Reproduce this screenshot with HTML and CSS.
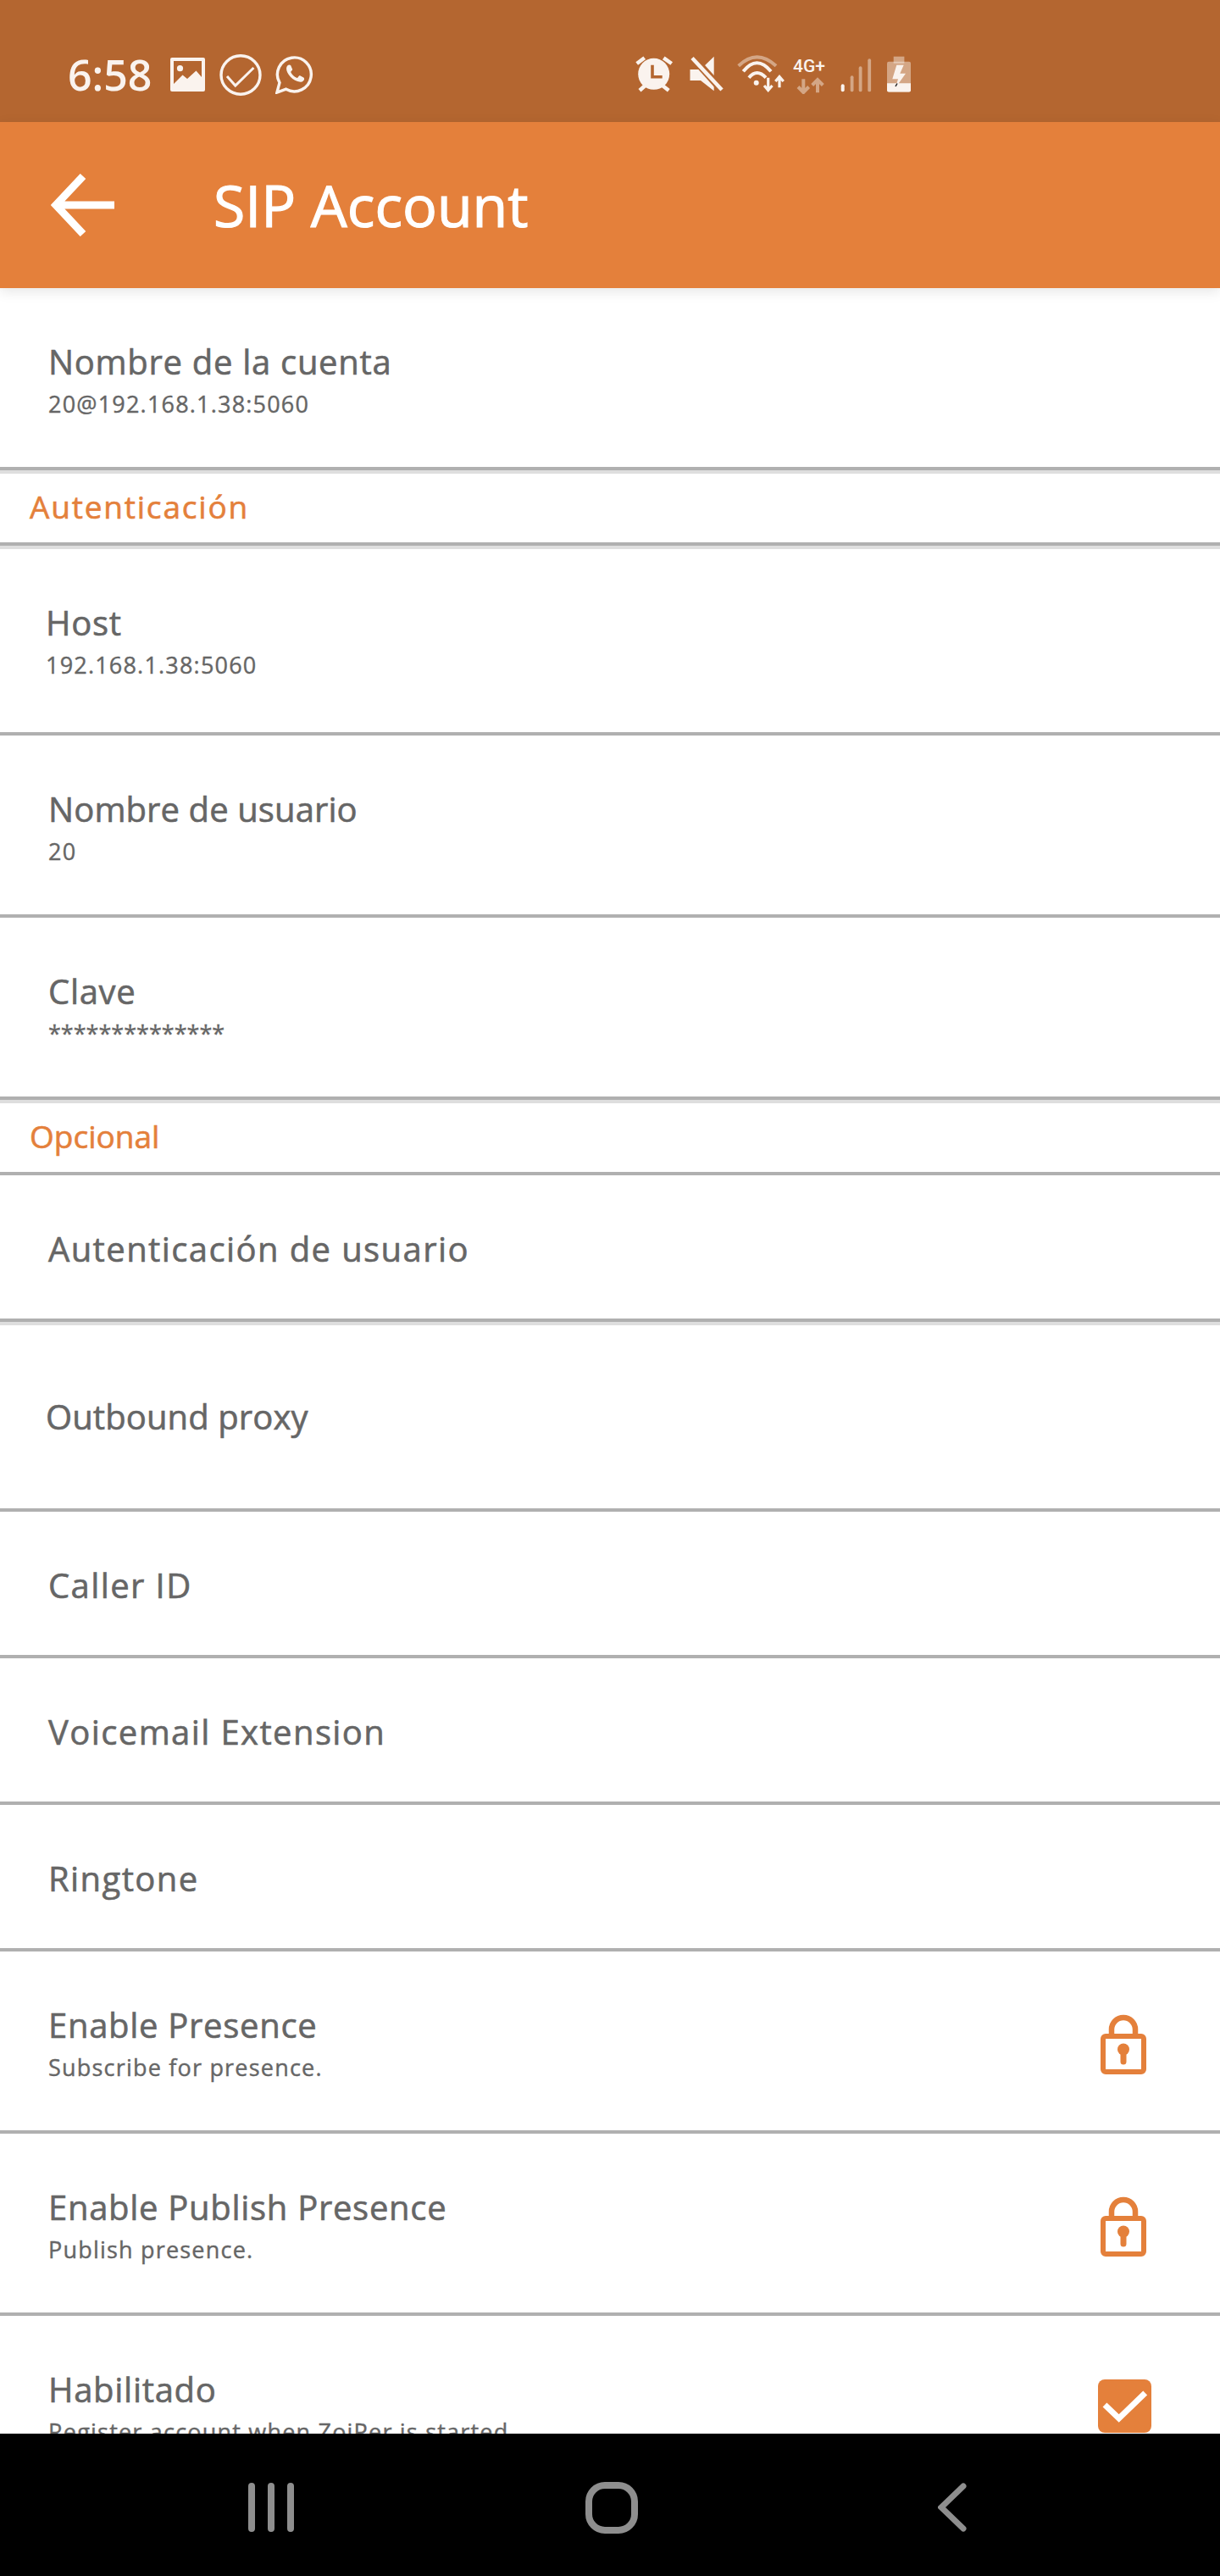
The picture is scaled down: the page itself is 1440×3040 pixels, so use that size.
FILE: index.html
```html
<!DOCTYPE html>
<html lang="es">
<head>
    <meta charset="UTF-8">
    <meta name="viewport" content="width=device-width, initial-scale=1.0">
    <title>SIP Account</title>
    <link rel="stylesheet" href="styles.css">
</head>
<body>
    <div class="screen">
        <div class="statusBar">
            <div class="statusLeft">
                <span class="clock">6:58</span>
                <svg class="icoImage" viewBox="0 0 41 40">
                    <rect width="41" height="40" rx="2" fill="#faf3ee"/>
                    <rect x="4" y="4" width="33" height="27" fill="#b46630"/>
                    <circle cx="11.5" cy="12.7" r="3.6" fill="#faf3ee"/>
                    <path d="M4 31 L14.5 20.5 L20 25 L30.5 15.5 L37 23 V31 Z" fill="#faf3ee"/>
                </svg>
                <svg class="icoCheck" viewBox="0 0 50 49">
                    <ellipse cx="25" cy="24.5" rx="23" ry="22.7" fill="none" stroke="#faf3ee" stroke-width="3.4"/>
                    <path d="M9 26 L18.8 37 L40.4 16" fill="none" stroke="#faf3ee" stroke-width="3"/>
                </svg>
                <svg class="icoChat" viewBox="0 0 24 24">
                    <path d="M1 23 L2.6 17 A10.4 10.4 0 1 1 6.6 21 Z" fill="none" stroke="#faf3ee" stroke-width="1.8"/>
                    <path d="M8.6 6c-.7 0-1.8.7-1.8 2.4 0 2.9 3.9 7.9 8.6 8.2 1.4.1 2.4-1 2.4-1.8 0-.5-.1-.8-.4-1l-2.2-1.1c-.3-.1-.5 0-.7.2l-.8 1c-.2.2-.4.2-.6.1-1.4-.6-2.8-1.8-3.5-3.3-.1-.2-.1-.4.1-.6l.7-.8c.1-.2.2-.4.1-.6L9.5 6.400c-.2-.3-.5-.4-.9-.4z" fill="#faf3ee"/>
                </svg>
            </div>
            <div class="statusRight">
                <svg class="icoAlarm" viewBox="0 0 64 46">
                    <circle cx="21.700" cy="22.300" r="18.500" fill="#faf3ee"/>
                    <path d="M1.700 10 L10.700 3.300 M33.300 3.300 L42.700 10 M5 41.700 L11.700 35.700 M31.700 35.700 L39.300 41.700" stroke="#faf3ee" stroke-width="4.500" fill="none"/>
                    <path d="M20 11.700 V25.700 H31.700" stroke="#b46630" stroke-width="3.600" fill="none"/>
                </svg>
                <svg class="icoMute" viewBox="0 0 56 46">
                    <path d="M.5 17 H13 L28.700 1.700 V42.300 L13 30 H.5 Z" fill="#faf3ee"/>
                    <path d="M3 2 L38 41" stroke="#b46630" stroke-width="9" fill="none"/>
                    <path d="M3 3.500 L38 41" stroke="#faf3ee" stroke-width="4.500" fill="none"/>
                </svg>
                <svg class="icoWifi" viewBox="0 0 66 46">
                    <path d="M1.700 12.700 Q23.300 -8 46 12.700" stroke="#faf3ee" stroke-opacity=".45" stroke-width="4" fill="none"/>
                    <path d="M7.300 19.300 Q23.300 -.7 40 19.300" stroke="#faf3ee" stroke-width="4" fill="none"/>
                    <path d="M14 26.700 Q23.300 15.300 34 26.700" stroke="#faf3ee" stroke-width="4" fill="none"/>
                    <circle cx="22.700" cy="32.700" r="3" fill="#faf3ee"/>
                    <path d="M36.700 26.700 V41 M32 36 L36.700 41.500 L41.500 36 M50 38.300 V26 M45.300 31 L50 25.500 L54.700 31" stroke="#faf3ee" stroke-width="3.200" fill="none"/>
                </svg>
                <svg class="icoData" viewBox="0 0 56 46">
                    <text class="netLabel" x="0" y="20">4G+</text>
                    <path d="M12.300 28.300 V44 M6 37.500 L12.300 44 L18.600 37.500 M29 44.300 V29 M22.700 35.500 L29 29 L35.300 35.500" stroke="#faf3ee" stroke-opacity=".45" stroke-width="4" fill="none"/>
                </svg>
                <svg class="icoSignal" viewBox="0 0 55 46">
                    <rect x=".7" y="34.300" width="4" height="9" rx="2" fill="#faf3ee"/>
                    <rect x="11.700" y="24.300" width="3.800" height="19" rx="1.900" fill="#faf3ee" fill-opacity=".45"/>
                    <rect x="21.700" y="13.300" width="3.800" height="30" rx="1.900" fill="#faf3ee" fill-opacity=".45"/>
                    <rect x="32.300" y="4.300" width="3.800" height="39" rx="1.900" fill="#faf3ee" fill-opacity=".45"/>
                </svg>
                <svg class="icoBattery" viewBox="0 0 29 46">
                    <rect x="7.700" y="1.700" width="12.700" height="8" fill="#faf3ee" fill-opacity=".45"/>
                    <rect x="0" y="7.700" width="28" height="35.700" rx="2" fill="#faf3ee" fill-opacity=".45"/>
                    <path d="M0 33.300 H28 V41.400 A2 2 0 0 1 26 43.400 H2 A2 2 0 0 1 0 41.400 Z" fill="#faf3ee"/>
                    <path d="M11.300 11.700 L6.300 28.300 H13 L9.700 39 L22 21.700 H15.300 L19.700 11.700 Z" fill="#faf3ee"/>
                    <path d="M10 37 L12 33.500" stroke="#222" stroke-width="1.500"/>
                </svg>
            </div>
        </div>

        <div class="toolbar">
            <svg class="backArrow" viewBox="0 0 75 74">
                <path d="M75 37 H6 M38 3 L6 37 L38 71" fill="none" stroke="#fff" stroke-width="9"/>
            </svg>
            <h1 class="toolbarTitle">SIP Account</h1>
        </div>

        <div class="settings">
            <div class="row rowSub">
                <div>
                    <div class="rowTitle">Nombre de la cuenta</div>
                    <div class="rowText">20@192.168.1.38:5060</div>
                </div>
            </div>
            <div class="rule ruleShadow"></div>
            <div class="sectionHead">Autenticación</div>
            <div class="rule ruleShadow"></div>
            <div class="row rowTall">
                <div>
                    <div class="rowTitle">Host</div>
                    <div class="rowText">192.168.1.38:5060</div>
                </div>
            </div>
            <div class="rule"></div>
            <div class="row rowSub">
                <div>
                    <div class="rowTitle titleTight">Nombre de usuario</div>
                    <div class="rowText">20</div>
                </div>
            </div>
            <div class="rule"></div>
            <div class="row rowSub">
                <div>
                    <div class="rowTitle">Clave</div>
                    <div class="rowText rowPass">**************</div>
                </div>
            </div>
            <div class="rule ruleShadow"></div>
            <div class="sectionHead sectionTight">Opcional</div>
            <div class="rule"></div>
            <div class="row">
                <div class="rowTitle titleWide">Autenticación de usuario</div>
            </div>
            <div class="rule ruleShadow"></div>
            <div class="row rowTall rowLow">
                <div class="rowTitle titleTight">Outbound proxy</div>
            </div>
            <div class="rule"></div>
            <div class="row">
                <div class="rowTitle titleWide">Caller ID</div>
            </div>
            <div class="rule"></div>
            <div class="row">
                <div class="rowTitle titleWide">Voicemail Extension</div>
            </div>
            <div class="rule"></div>
            <div class="row">
                <div class="rowTitle titleWide">Ringtone</div>
            </div>
            <div class="rule"></div>
            <div class="row rowSub">
                <div>
                    <div class="rowTitle">Enable Presence</div>
                    <div class="rowText">Subscribe for presence.</div>
                </div>
                <svg class="lock" viewBox="0 0 54 71">
                    <path d="M13 26 V18 A14 14 0 0 1 41 18 V26" fill="none" stroke="#e4803b" stroke-width="6.500"/>
                    <rect x="3" y="26" width="48" height="42" rx="3" fill="none" stroke="#e4803b" stroke-width="6"/>
                    <circle cx="27" cy="41.500" r="7" fill="#e4803b"/>
                    <path d="M27 42 V56" stroke="#e4803b" stroke-width="7" stroke-linecap="round"/>
                </svg>
            </div>
            <div class="rule"></div>
            <div class="row rowSub">
                <div>
                    <div class="rowTitle">Enable Publish Presence</div>
                    <div class="rowText">Publish presence.</div>
                </div>
                <svg class="lock" viewBox="0 0 54 71">
                    <path d="M13 26 V18 A14 14 0 0 1 41 18 V26" fill="none" stroke="#e4803b" stroke-width="6.500"/>
                    <rect x="3" y="26" width="48" height="42" rx="3" fill="none" stroke="#e4803b" stroke-width="6"/>
                    <circle cx="27" cy="41.500" r="7" fill="#e4803b"/>
                    <path d="M27 42 V56" stroke="#e4803b" stroke-width="7" stroke-linecap="round"/>
                </svg>
            </div>
            <div class="rule"></div>
            <div class="row rowSub">
                <div>
                    <div class="rowTitle">Habilitado</div>
                    <div class="rowText">Register account when ZoiPer is started</div>
                </div>
                <svg class="checkBox" viewBox="0 0 63 63">
                    <rect width="63" height="63" rx="8" fill="#e4803b"/>
                    <path d="M8 30 L24.700 46 L55.700 16" fill="none" stroke="#fff" stroke-width="7"/>
                </svg>
            </div>
        </div>

        <div class="navBar">
            <svg class="navRecent" viewBox="0 0 54 58">
                <path d="M4 4 V54 M27 4 V54 M50 4 V54" stroke="#8e8e8e" stroke-width="8" stroke-linecap="round"/>
            </svg>
            <svg class="navHome" viewBox="0 0 62 61">
                <rect x="4" y="4" width="54" height="53" rx="19" fill="none" stroke="#8e8e8e" stroke-width="8"/>
            </svg>
            <svg class="navBack" viewBox="0 0 34 58">
                <path d="M30 4 L4 29 L30 54" fill="none" stroke="#8e8e8e" stroke-width="7" stroke-linecap="round"/>
            </svg>
        </div>
    </div>
</body>
</html>
```

FILE: styles.css
```css
body {
    margin: 0;
    background-color: #fff;
    font-family: 'Open Sans', 'Liberation Sans', sans-serif;
    color: #666;
}
.screen {
    display: flex;
    flex-direction: column;
    height: 3040px;
    overflow: hidden;
}

/* status bar */
.statusBar {
    flex: none;
    display: flex;
    justify-content: space-between;
    align-items: center;
    box-sizing: border-box;
    height: 144px;
    padding: 32px 364px 0 80px;
    background-color: #b46630;
}
.statusLeft, .statusRight {
    display: flex;
    align-items: center;
}
.clock {
    width: 121px;
    font-size: 50px;
    line-height: 50px;
    font-weight: 600;
    color: #faf3ee;
}
.icoImage { width: 41px; height: 40px; margin-right: 17px; }
.icoCheck { width: 50px; height: 49px; margin-right: 16px; }
.icoChat { width: 46px; height: 46px; }
.icoAlarm { width: 64px; height: 46px; }
.icoMute { width: 56px; height: 46px; }
.icoWifi { width: 66px; height: 46px; }
.icoData { width: 56px; height: 46px; }
.icoSignal { width: 55px; height: 46px; }
.icoBattery { width: 29px; height: 46px; }
.netLabel {
    font-family: 'Roboto', sans-serif;
    font-size: 21px;
    font-weight: 500;
    fill: #faf3ee;
}

/* toolbar */
.toolbar {
    flex: none;
    position: relative;
    z-index: 1;
    display: flex;
    align-items: center;
    height: 196px;
    padding-left: 60px;
    background-color: #e4803b;
    box-shadow: 0 4px 14px rgba(0, 0, 0, 0.1);
}
.backArrow {
    width: 75px;
    height: 74px;
    margin-right: 117px;
}
.toolbarTitle {
    margin: 0;
    font-size: 68px;
    font-weight: 400;
    line-height: 70px;
    -webkit-text-stroke: 1.2px #fff;
    color: #fff;
}

/* settings list */
.settings {
    flex: 1;
    min-height: 0;
    overflow: hidden;
}
.row {
    display: flex;
    justify-content: space-between;
    align-items: flex-start;
    box-sizing: border-box;
    height: 169px;
    padding: 64px 0 0 57px;
}
.rowSub {
    height: 211px;
}
.rowTall {
    height: 216px;
    padding-left: 54px;
}
.rowLow {
    padding-top: 85px;
}
.rowTitle {
    font-size: 40px;
    line-height: 46px;
    letter-spacing: 0.7px;
    -webkit-text-stroke: 0.6px #666;
    color: #666;
}
.titleWide {
    letter-spacing: 1.4px;
}
.titleTight {
    letter-spacing: 0.1px;
}
.rowText {
    margin-top: 4px;
    font-size: 27px;
    line-height: 46px;
    letter-spacing: 1.2px;
    -webkit-text-stroke: 0.4px #666;
    color: #666;
}
.rowPass {
    letter-spacing: 0;
}
.rule {
    height: 4px;
    background-color: #b0b0b0;
}
.ruleShadow {
    height: 8px;
    background: linear-gradient(#b0b0b0 50%, #dedede 50%);
}
.sectionHead {
    box-sizing: border-box;
    height: 81px;
    padding: 16px 0 0 35px;
    font-size: 37px;
    line-height: 46px;
    letter-spacing: 1.8px;
    -webkit-text-stroke: 0.6px #e4803b;
    color: #e4803b;
}
.sectionTight {
    letter-spacing: 0;
}
.lock {
    flex: none;
    width: 54px;
    height: 71px;
    margin: 10px 87px 0 0;
}
.checkBox {
    flex: none;
    width: 63px;
    height: 63px;
    margin: 11px 81px 0 0;
}

/* bottom nav */
.navBar {
    flex: none;
    display: flex;
    align-items: center;
    box-sizing: border-box;
    height: 168px;
    padding: 6px 0 0 293px;
    background-color: #000;
}
.navRecent { width: 54px; height: 58px; }
.navHome { width: 62px; height: 61px; margin: 0 354px 0 344px; }
.navBack { width: 34px; height: 58px; }
```
